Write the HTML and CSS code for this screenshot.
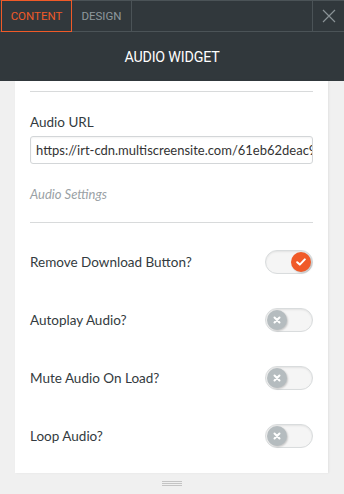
FILE: index.html
```html
<!DOCTYPE html>
<html>
<head>
<meta charset="utf-8">
<link rel="stylesheet" href="styles.css">
</head>
<body>
<div class="panel">
  <div class="header">
    <div class="tabs">
      <div class="tab active">CONTENT</div>
      <div class="tab">DESIGN</div>
      <div class="spacer"></div>
      <div class="close">
        <svg width="14" height="14" viewBox="0 0 14 14"><path d="M1 1L13 13M13 1L1 13" stroke="#8a9296" stroke-width="1.2" fill="none"/></svg>
      </div>
    </div>
    <div class="title">AUDIO WIDGET</div>
  </div>
  <div class="body">
    <div class="card">
      <hr class="rule first">
      <div class="label">Audio URL</div>
      <div class="input">https://irt-cdn.multiscreensite.com/61eb62deac99a4b4b1c2</div>
      <div class="section">Audio Settings</div>
      <hr class="rule">
      <div class="rows">
        <div class="row"><span>Remove Download Button?</span><span class="toggle on"><span class="knob"><svg width="10" height="8" viewBox="0 0 10 8"><path d="M1.2 4.2L3.8 6.6L8.8 1.4" stroke="#fff" stroke-width="2" fill="none" stroke-linecap="round" stroke-linejoin="round"/></svg></span></span></div>
        <div class="row"><span>Autoplay Audio?</span><span class="toggle"><span class="knob"><svg width="8" height="8" viewBox="0 0 8 8"><path d="M1.5 1.5L6.5 6.5M6.5 1.5L1.5 6.5" stroke="#fff" stroke-width="2" stroke-linecap="round"/></svg></span></span></div>
        <div class="row"><span>Mute Audio On Load?</span><span class="toggle"><span class="knob"><svg width="8" height="8" viewBox="0 0 8 8"><path d="M1.5 1.5L6.5 6.5M6.5 1.5L1.5 6.5" stroke="#fff" stroke-width="2" stroke-linecap="round"/></svg></span></span></div>
        <div class="row"><span>Loop Audio?</span><span class="toggle"><span class="knob"><svg width="8" height="8" viewBox="0 0 8 8"><path d="M1.5 1.5L6.5 6.5M6.5 1.5L1.5 6.5" stroke="#fff" stroke-width="2" stroke-linecap="round"/></svg></span></span></div>
      </div>
    </div>
    <div class="handle"><i></i><i></i><i></i></div>
  </div>
</div>
</body>
</html>
```
FILE: styles.css
```css
* { box-sizing: border-box; }
html, body { margin: 0; padding: 0; }
body { width: 344px; height: 494px; overflow: hidden; background: #f0f0f0; font-family: Lato, "Open Sans", sans-serif; }
.panel { display: flex; flex-direction: column; height: 494px; }
.header { background: #31383c; }
.tabs { display: flex; height: 32px; border-bottom: 1px solid #4b5357; border-top: 1px solid #4b5357; }
.tab { font-family: Roboto, sans-serif; font-size: 11.5px; color: #8f989c; display: flex; align-items: center; justify-content: center; border-right: 1px solid #4b5357; width: 60px; }
.tab.active { color: #f05a28; border: 1px solid #f05a28; width: 71px; margin-top: -1px; margin-left: 1px; height: 32px; }
.spacer { flex: 1; border-right: 1px solid #4b5357; }
.close { width: 31px; display: flex; align-items: center; justify-content: center; }
.title { height: 49px; display: flex; align-items: center; justify-content: center; color: #fff; font-family: Roboto, sans-serif; font-size: 15.5px; letter-spacing: -0.2px; transform: scaleX(0.92); }
.body { flex: 1; display: flex; flex-direction: column; }
.card { background: #fff; margin: 0 16px 0 15px; padding: 0 15px 8px; flex: 1; box-shadow: 1px 0 2px rgba(0,0,0,0.06); }
.rule { border: 0; border-top: 1px solid #d8dadb; margin: 0; }
.rule.first { margin-top: 10px; }
.label { font-size: 13.5px; color: #333b40; margin-top: 21px; line-height: 18px; }
.input { margin-top: 5px; height: 28px; border: 1px solid #d3d6d8; border-radius: 3px; font-size: 13px; color: #333; line-height: 26px; padding-left: 5px; white-space: nowrap; overflow: hidden; box-shadow: inset 0 1px 2px rgba(0,0,0,0.05); }
.section { font-size: 13px; font-style: italic; color: #9aa1a5; margin-top: 21px; line-height: 18px; margin-bottom: 19px; }
.rows { padding-top: 10px; }
.row { display: flex; align-items: center; justify-content: space-between; height: 58px; font-size: 13.5px; color: #333b40; }
.toggle { width: 48px; height: 24px; border-radius: 12px; background: #f5f5f5; border: 1px solid #d9dcdd; position: relative; box-shadow: inset 0 1px 2px rgba(0,0,0,0.08); }
.knob { position: absolute; top: 1px; left: 1px; width: 20px; height: 20px; border-radius: 50%; background: #b5bcbf; display: flex; align-items: center; justify-content: center; box-shadow: 1px 1px 2px rgba(0,0,0,0.2); }
.toggle.on .knob { left: 25px; background: #f05a28; }
.handle { height: 21px; display: flex; flex-direction: column; align-items: center; justify-content: center; gap: 1px; }
.handle i { display: block; width: 20px; height: 1px; background: #c4c4c4; }
```
